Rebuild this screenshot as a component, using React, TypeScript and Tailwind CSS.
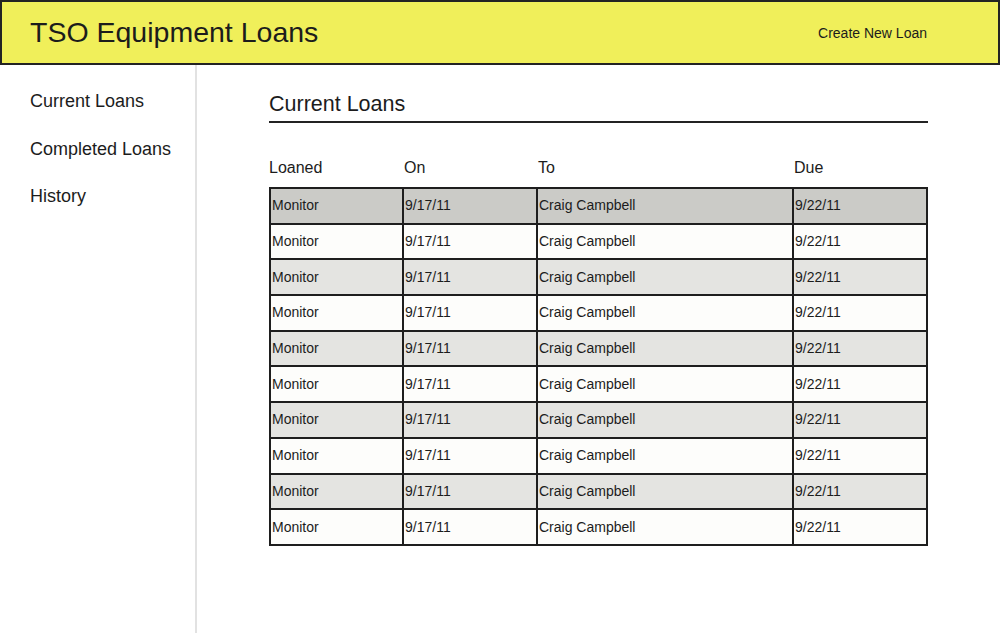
const rows = Array.from({ length: 10 }, () => ({
  item: "Monitor",
  on: "9/17/11",
  to: "Craig Campbell",
  due: "9/22/11",
}));

function rowBg(i: number) {
  if (i === 0) return "bg-[#cbcbc7]";
  return i % 2 === 0 ? "bg-[#e4e4e1]" : "bg-[#fdfdfb]";
}

export default function App() {
  return (
    <div className="h-[633px] w-[1000px] bg-white text-[#1c1c1c] font-['Liberation_Sans',Arial,sans-serif] flex flex-col overflow-hidden">
      {/* header bar */}
      <header className="h-[65px] shrink-0 bg-[#f0ef5a] border-2 border-[#232323] flex items-center justify-between pl-[28px] pr-[71px]">
        <h1 className="text-[28.5px] leading-none">TSO Equipment Loans</h1>
        <a className="text-[14px] leading-none">Create New Loan</a>
      </header>

      <div className="flex flex-1">
        {/* side nav */}
        <nav className="w-[197px] shrink-0 border-r-2 border-[#e2e2e2] pl-[30px] pt-[26px] flex flex-col gap-[27.5px]">
          <a className="text-[18px] leading-[20px]">Current Loans</a>
          <a className="text-[18px] leading-[20px]">Completed Loans</a>
          <a className="text-[18px] leading-[20px]">History</a>
        </nav>

        {/* main */}
        <main className="flex-1 pl-[72px] pr-[72px] pt-[27px]">
          <h2 className="text-[21.5px] leading-[24px] pb-[5px] border-b-2 border-[#232323]">Current Loans</h2>

          <div className="flex mt-[35px] mb-[9px] text-[16px] leading-[20px]">
            <div className="w-[135px]">Loaned</div>
            <div className="w-[134px]">On</div>
            <div className="w-[256px]">To</div>
            <div className="flex-1">Due</div>
          </div>

          <div className="border-2 border-[#1e1e1e] text-[14px]">
            {rows.map((r, i) => (
              <div key={i} className={`flex ${i > 0 ? "h-[35.7px] border-t-2 border-[#1e1e1e]" : "h-[33.7px]"} ${rowBg(i)}`}>
                <div className="w-[131px] flex items-center pl-px">{r.item}</div>
                <div className="w-[134px] flex items-center pl-px border-l-2 border-[#1e1e1e]">{r.on}</div>
                <div className="w-[256px] flex items-center pl-px border-l-2 border-[#1e1e1e]">{r.to}</div>
                <div className="flex-1 flex items-center pl-px border-l-2 border-[#1e1e1e]">{r.due}</div>
              </div>
            ))}
          </div>
        </main>
      </div>
    </div>
  );
}
